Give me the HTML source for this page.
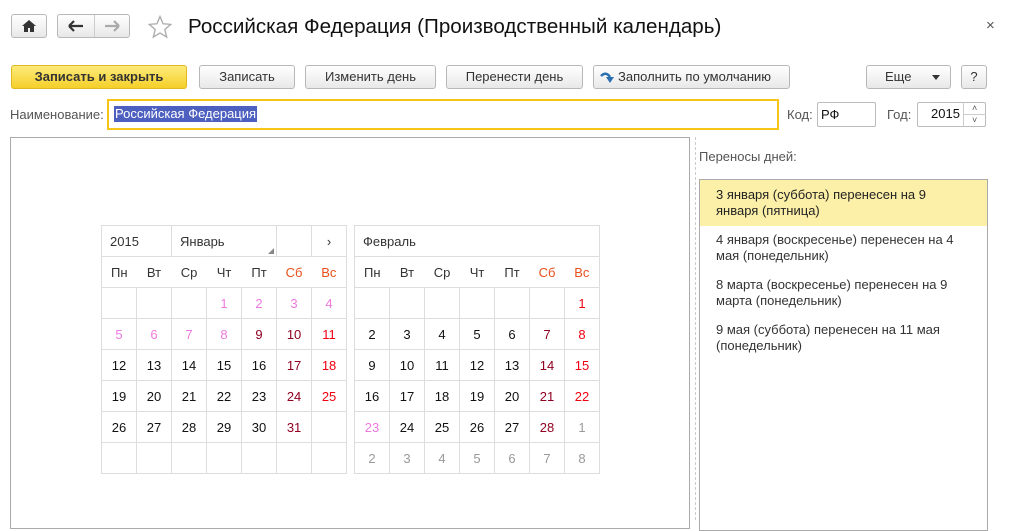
<!DOCTYPE html>
<html><head><meta charset="utf-8"><style>
body{margin:0;width:1013px;height:520px;background:#fff;font-family:"Liberation Sans",Arial,sans-serif;font-size:13px;color:#333;position:relative;overflow:hidden}
.a{position:absolute}
.btn{position:absolute;box-sizing:border-box;border:1px solid #b8b8b8;border-radius:3px;background:linear-gradient(#fff,#e8e8e8);text-align:center;line-height:22px;height:24px;color:#333;font-size:13px}
table{border-collapse:collapse;position:absolute;table-layout:fixed;width:245px}
td{border:1px solid #ddd;height:30px;padding:0;text-align:center;font-size:13px;color:#111;overflow:hidden;white-space:nowrap}
.hd td{border-left:none;border-right:none;color:#333}
.hd td:first-child{border-left:1px solid #ddd}.hd td:last-child{border-right:1px solid #ddd}
.w{color:#e8501c!important}
.h{color:#ee7ae0}.s{color:#900020}.r{color:#f00010}.g{color:#999}
.top td{text-align:left;padding-left:8px;color:#333}
</style></head><body>
<div class="btn" style="left:11px;top:14px;width:36px;height:24px"><svg width="14" height="12" viewBox="0 0 14 12" style="margin-top:5px"><path d="M7 0L0 6h2v6h4V8h2v4h4V6h2z" fill="#333"/></svg></div>
<div class="btn" style="left:57px;top:14px;width:73px;height:24px"></div>
<div class="a" style="left:94px;top:15px;width:1px;height:22px;background:#ccc"></div>
<svg class="a" style="left:68px;top:20px" width="16" height="12"><path d="M1 6h14M1 6l5-5M1 6l5 5" stroke="#333" stroke-width="2.2" fill="none"/></svg>
<svg class="a" style="left:104px;top:20px" width="16" height="12"><path d="M1 6h14M15 6l-5-5M15 6l-5 5" stroke="#aaa" stroke-width="2.2" fill="none"/></svg>
<svg class="a" style="left:148px;top:15px" width="24" height="24"><path d="M12 1.5l3 7.3 7.8.6-6 5.1 1.9 7.6L12 18l-6.7 4.1 1.9-7.6-6-5.1 7.8-.6z" fill="none" stroke="#aaa" stroke-width="1.3"/></svg>
<div class="a" style="left:188px;top:15px;font-size:20.6px;color:#111">Российская Федерация (Производственный календарь)</div>
<div class="a" style="left:986px;top:17px;font-size:15px;color:#555">×</div>

<div class="btn" style="left:11px;top:65px;width:176px;background:linear-gradient(#fdeb7a,#f5cf2a);border-color:#e0b820;font-weight:bold;color:#333">Записать и закрыть</div>
<div class="btn" style="left:199px;top:65px;width:96px">Записать</div>
<div class="btn" style="left:305px;top:65px;width:131px">Изменить день</div>
<div class="btn" style="left:446px;top:65px;width:137px">Перенести день</div>
<div class="btn" style="left:593px;top:65px;width:197px;text-align:left;padding-left:24px">Заполнить по умолчанию</div>
<svg class="a" style="left:600px;top:71px" width="14" height="13"><path d="M1 5q5-5 9 1" stroke="#2a6fb0" stroke-width="2.5" fill="none"/><path d="M6 6h8l-4 6z" fill="#2a6fb0"/></svg>
<div class="btn" style="left:866px;top:65px;width:85px;text-align:left;padding-left:18px">Еще</div>
<div class="a" style="left:932px;top:75px;border:4px solid transparent;border-top:5px solid #333"></div>
<div class="btn" style="left:961px;top:65px;width:26px;font-size:13px">?</div>

<div class="a" style="left:10px;top:107px;color:#555">Наименование:</div>
<div class="a" style="left:107px;top:99px;width:668px;height:27px;border:2px solid #f5c518"></div>
<div class="a" style="left:114px;top:106px;background:#4d5fbf;color:#fff;height:16px;line-height:16px;font-size:13px;padding:0 1px">Российская Федерация</div>
<div class="a" style="left:787px;top:107px;color:#555">Код:</div>
<div class="a" style="left:817px;top:102px;border:1px solid #bbb;border-radius:2px;line-height:24px;padding-left:3px;box-sizing:border-box;width:59px;height:25px;font-size:13px;color:#111">РФ</div>
<div class="a" style="left:887px;top:107px;color:#555">Год:</div>
<div class="a" style="left:917px;top:102px;width:69px;height:25px;border:1px solid #bbb;border-radius:2px;box-sizing:border-box"></div>
<div class="a" style="left:931px;top:106px;font-size:13px;color:#111">2015</div>
<div class="a" style="left:963px;top:102px;width:1px;height:25px;background:#ccc"></div>
<div class="a" style="left:964px;top:114px;width:22px;height:1px;background:#ccc"></div>
<div class="a" style="left:972px;top:103px;font-size:9px;color:#555">˄</div>
<div class="a" style="left:972px;top:115px;font-size:9px;color:#555">˅</div>

<div class="a" style="left:10px;top:137px;width:678px;height:390px;border:1px solid #aaa"></div>
<div class="a" style="left:695px;top:137px;height:383px;border-left:1px dashed #ccc"></div>
<div class="a" style="left:699px;top:149px;color:#555">Переносы дней:</div>
<div class="a" style="left:699px;top:179px;width:287px;height:350px;border:1px solid #aaa"></div>
<div class="a" style="left:700px;top:180px;width:287px;height:46px;background:#fcf0a8"></div>
<div class="a" style="left:716px;top:187px;width:240px;line-height:16px;color:#222">3 января (суббота) перенесен на 9 января (пятница)</div>
<div class="a" style="left:716px;top:232px;width:240px;line-height:16px;color:#333">4 января (воскресенье) перенесен на 4 мая (понедельник)</div>
<div class="a" style="left:716px;top:277px;width:240px;line-height:16px;color:#333">8 марта (воскресенье) перенесен на 9 марта (понедельник)</div>
<div class="a" style="left:716px;top:322px;width:240px;line-height:16px;color:#333">9 мая (суббота) перенесен на 11 мая (понедельник)</div>

<table style="left:101px;top:225px">
<colgroup><col style="width:35px"><col style="width:35px"><col style="width:35px"><col style="width:35px"><col style="width:35px"><col style="width:35px"><col style="width:35px"></colgroup>
<tr class="top"><td colspan="2">2015</td><td colspan="3">Январь</td><td></td><td style="text-align:center;padding:0">›</td></tr>
<tr class="hd"><td>Пн</td><td>Вт</td><td>Ср</td><td>Чт</td><td>Пт</td><td class="w">Сб</td><td class="w">Вс</td></tr>
<tr><td></td><td></td><td></td><td class="h">1</td><td class="h">2</td><td class="h">3</td><td class="h">4</td></tr>
<tr><td class="h">5</td><td class="h">6</td><td class="h">7</td><td class="h">8</td><td class="s">9</td><td class="s">10</td><td class="r">11</td></tr>
<tr><td>12</td><td>13</td><td>14</td><td>15</td><td>16</td><td class="s">17</td><td class="r">18</td></tr>
<tr><td>19</td><td>20</td><td>21</td><td>22</td><td>23</td><td class="s">24</td><td class="r">25</td></tr>
<tr><td>26</td><td>27</td><td>28</td><td>29</td><td>30</td><td class="s">31</td><td></td></tr>
<tr><td></td><td></td><td></td><td></td><td></td><td></td><td></td></tr>
</table>
<div class="a" style="left:268px;top:248px;border:3px solid transparent;border-right-color:#888;border-bottom-color:#888"></div>
<table style="left:354px;top:225px">
<colgroup><col style="width:35px"><col style="width:35px"><col style="width:35px"><col style="width:35px"><col style="width:35px"><col style="width:35px"><col style="width:35px"></colgroup>
<tr class="top"><td colspan="7">Февраль</td></tr>
<tr class="hd"><td>Пн</td><td>Вт</td><td>Ср</td><td>Чт</td><td>Пт</td><td class="w">Сб</td><td class="w">Вс</td></tr>
<tr><td></td><td></td><td></td><td></td><td></td><td></td><td class="r">1</td></tr>
<tr><td>2</td><td>3</td><td>4</td><td>5</td><td>6</td><td class="s">7</td><td class="r">8</td></tr>
<tr><td>9</td><td>10</td><td>11</td><td>12</td><td>13</td><td class="s">14</td><td class="r">15</td></tr>
<tr><td>16</td><td>17</td><td>18</td><td>19</td><td>20</td><td class="s">21</td><td class="r">22</td></tr>
<tr><td class="h">23</td><td>24</td><td>25</td><td>26</td><td>27</td><td class="s">28</td><td class="g">1</td></tr>
<tr><td class="g">2</td><td class="g">3</td><td class="g">4</td><td class="g">5</td><td class="g">6</td><td class="g">7</td><td class="g">8</td></tr>
</table>
</body></html>
